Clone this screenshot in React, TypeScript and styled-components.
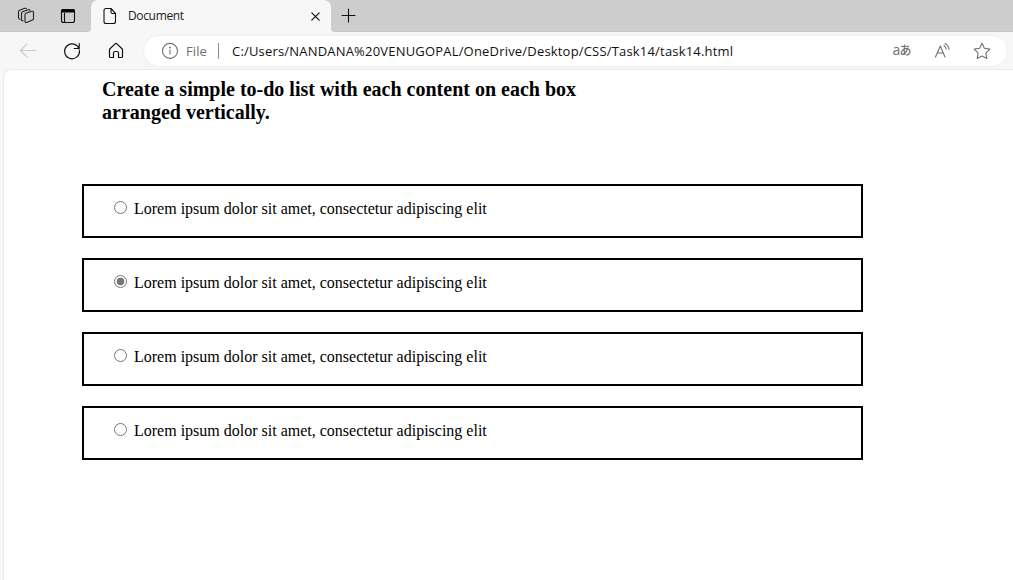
import React from 'react';
import styled, { createGlobalStyle } from 'styled-components';

const GlobalStyle = createGlobalStyle`
  * { box-sizing: border-box; }
  html, body { margin: 0; padding: 0; background: #f7f7f7; }
  body { overflow: hidden; }
`;

const Browser = styled.div`
  width: 1013px;
  height: 580px;
  display: flex;
  flex-direction: column;
  background: #f7f7f7;
  font-family: 'Open Sans', 'Noto Sans', sans-serif;
`;

const TabStrip = styled.div`
  height: 32px;
  flex: none;
  display: flex;
  background: #f7f7f7;
`;

const StripStart = styled.div`
  width: 91px;
  display: flex;
  align-items: center;
  gap: 24px;
  padding-left: 17px;
  background: #cdcdcd;
  border-bottom: 1px solid #c4c4c4;
  border-bottom-right-radius: 4px;
`;

const TabBacking = styled.div`
  width: 240px;
  background: linear-gradient(#cdcdcd 12px, #f7f7f7 12px);
`;

const Tab = styled.div`
  height: 32px;
  display: flex;
  align-items: center;
  padding: 0 7px 0 10px;
  background: #f7f7f7;
  border-radius: 7px 7px 0 0;
`;

const TabTitle = styled.span`
  flex: 1;
  margin-left: 9px;
  font-size: 12px;
  line-height: 16px;
  color: #1b1b1b;
  letter-spacing: -0.35px;
`;

const StripEnd = styled.div`
  flex: 1;
  display: flex;
  align-items: center;
  padding-left: 9px;
  background: #cdcdcd;
  border-bottom: 1px solid #c4c4c4;
  border-bottom-left-radius: 4px;
`;

const Toolbar = styled.div`
  height: 37px;
  flex: none;
  display: flex;
  align-items: center;
  padding: 0 6px 0 18px;
`;

const NavButtons = styled.div`
  width: 126px;
  display: flex;
  gap: 24px;
`;

const AddressBar = styled.div`
  flex: 1;
  height: 30px;
  display: flex;
  align-items: center;
  padding: 0 15px 0 16px;
  background: #fff;
  border-radius: 15px;
  box-shadow: 0 0 3px rgba(0, 0, 0, 0.07);
`;

const Scheme = styled.span`
  width: 32px;
  margin-left: 6px;
  font-size: 13px;
  line-height: 18px;
  color: #707070;
  letter-spacing: 0.1px;
`;

const Divider = styled.span`
  width: 1px;
  height: 16px;
  margin-right: 13px;
  background: #8a8a8a;
`;

const Url = styled.span`
  flex: 1;
  font-size: 13px;
  line-height: 18px;
  color: #111;
  white-space: nowrap;
  letter-spacing: 0.19px;
`;

const Actions = styled.div`
  display: flex;
  align-items: center;
  gap: 20px;
`;

const Glyph = styled.svg`
  display: block;
  flex: none;
  fill: none;
  stroke-linecap: round;
  stroke-linejoin: round;
`;

const Translate = styled.span`
  width: 20px;
  display: flex;
  align-items: baseline;
  justify-content: center;
  color: #707070;
  font-size: 14px;
  line-height: 20px;
  padding-bottom: 2px;

  small {
    margin-left: -1px;
    font-family: 'Noto Sans CJK JP', sans-serif;
    font-size: 12px;
    font-weight: 500;
    line-height: 12px;
  }
`;

const Page = styled.main`
  flex: 1;
  margin-left: 3px;
  padding: 8px 0 0 78px;
  background: #fff;
  border: 1px solid #ebebeb;
  border-width: 1px 0 0 1px;
  border-top-left-radius: 8px;
  font-family: 'Liberation Serif', serif;
  color: #000;
`;

const Heading = styled.h3`
  width: 500px;
  margin: 0 0 60px 20px;
  font-size: 20px;
  line-height: 23px;
  font-weight: 700;
`;

const TodoList = styled.div`
  width: 781px;
  display: flex;
  flex-direction: column;
  gap: 20px;
`;

const TodoBox = styled.label`
  height: 54px;
  display: flex;
  align-items: flex-start;
  padding: 14px 30px;
  border: 2px solid #000;
  font-size: 16px;
  line-height: 18px;
`;

const Radio = styled.span<{ $checked: boolean }>`
  width: 13px;
  height: 13px;
  flex: none;
  margin: 1px 7px 0 0;
  border: 1px solid #767676;
  border-radius: 50%;
  background: ${({ $checked }) =>
    $checked ? 'radial-gradient(circle, #767676 3.5px, #fff 4.2px)' : '#fff'};
`;

const items = [false, true, false, false];

export default function App() {
  return (
    <>
      <GlobalStyle />
      <Browser>
        <TabStrip>
          <StripStart>
            <Glyph width="18" height="18" stroke="#222" strokeWidth="1.1">
              <path d="M8.9 6.2 14.8 4.3Q16.5 3.9 16.5 5.5V11.4Q16.5 12.7 15.5 13.1L9.6 15.4Q8 15.9 8 14.3V7.5Q8 6.5 8.9 6.2Z" />
              <path d="M6.2 13.7Q4.5 14 4.5 12.4V6.4Q4.5 5.1 5.6 4.7L11.4 2.7Q12.4 2.4 12.8 3.2" />
              <path d="M3.1 12.3Q1.5 12.3 1.5 10.7V4.8Q1.5 3.6 2.6 3.2L7.8 1.3Q9 1 9.4 1.8" />
            </Glyph>
            <Glyph width="18" height="18" stroke="#111" strokeWidth="1.1">
              <rect x="2.5" y="2.5" width="13" height="13" rx="2" />
              <path d="M2.5 5V4Q2.5 2.5 4 2.5H14Q15.5 2.5 15.5 4V5Z" fill="#000" />
              <path d="M5.5 6V15" />
            </Glyph>
          </StripStart>
          <TabBacking>
            <Tab>
              <Glyph width="18" height="18" stroke="#111" strokeWidth="1.1">
                <path d="M5 1.5H10L14.5 6.3V14.5Q14.5 16.5 12.5 16.5H5Q3 16.5 3 14.5V3.5Q3 1.5 5 1.5ZM10 1.7V5Q10 6.5 11.5 6.5H14.3" />
              </Glyph>
              <TabTitle>Document</TabTitle>
              <Glyph width="18" height="18" stroke="#111" strokeWidth="1.2">
                <path d="M5.8 5.8 13.2 13.2M13.2 5.8 5.8 13.2" />
              </Glyph>
            </Tab>
          </TabBacking>
          <StripEnd>
            <Glyph width="18" height="18" stroke="#111" strokeWidth="1.1">
              <path d="M2 8.5H15M8.5 2V15" />
            </Glyph>
          </StripEnd>
        </TabStrip>
        <Toolbar>
          <NavButtons>
            <Glyph width="20" height="20" stroke="#cacaca" strokeWidth="1.1">
              <path d="M17.5 9.5H2.5M9 3 2.5 9.5 9 16" />
            </Glyph>
            <Glyph width="20" height="20" stroke="#111" strokeWidth="1.2">
              <path d="M17.1 8.1A7.4 7.4 0 1 0 17.4 9.5M17.2 2.5V7.5H12.2" />
            </Glyph>
            <Glyph width="20" height="20" stroke="#111" strokeWidth="1.2">
              <path d="M3.5 8.2 9.1 2.9Q10 2.1 10.9 2.9L16.5 8.2V15.5Q16.5 16.5 15.5 16.5H12.5V12Q12.5 10.5 11 10.5H9Q7.5 10.5 7.5 12V16.5H4.5Q3.5 16.5 3.5 15.5Z" />
            </Glyph>
          </NavButtons>
          <AddressBar>
            <Glyph width="20" height="20" stroke="#707070" strokeWidth="1.1">
              <circle cx="10" cy="9.9" r="7.5" />
              <path d="M10 9V13" />
              <circle cx="10" cy="6.5" r=".35" fill="#707070" />
            </Glyph>
            <Scheme>File</Scheme>
            <Divider />
            <Url>C:/Users/NANDANA%20VENUGOPAL/OneDrive/Desktop/CSS/Task14/task14.html</Url>
            <Actions>
              <Translate>a<small>あ</small></Translate>
              <Glyph width="20" height="20" stroke="#707070" strokeWidth="1.1">
                <path d="M3.5 16 8.3 5 13 16M5.3 12H11.4M12 4.5Q14 5.8 14.1 8M13 2.5Q16.6 4.5 17 8.5" />
              </Glyph>
              <Glyph width="20" height="20" stroke="#707070" strokeWidth="1.1">
                <path d="M10 2.2 12.4 7.3 17.8 8.1 13.9 12.1 14.8 17.5 10 15 5.2 17.5 6.1 12.1 2.2 8.1 7.6 7.3Z" />
              </Glyph>
            </Actions>
          </AddressBar>
        </Toolbar>
        <Page>
          <Heading>
            Create a simple to-do list with each content on each box
            <br />
            arranged vertically.
          </Heading>
          <TodoList>
            {items.map((checked, index) => (
              <TodoBox key={index}>
                <Radio $checked={checked} role="radio" aria-checked={checked} />
                Lorem ipsum dolor sit amet, consectetur adipiscing elit
              </TodoBox>
            ))}
          </TodoList>
        </Page>
      </Browser>
    </>
  );
}
